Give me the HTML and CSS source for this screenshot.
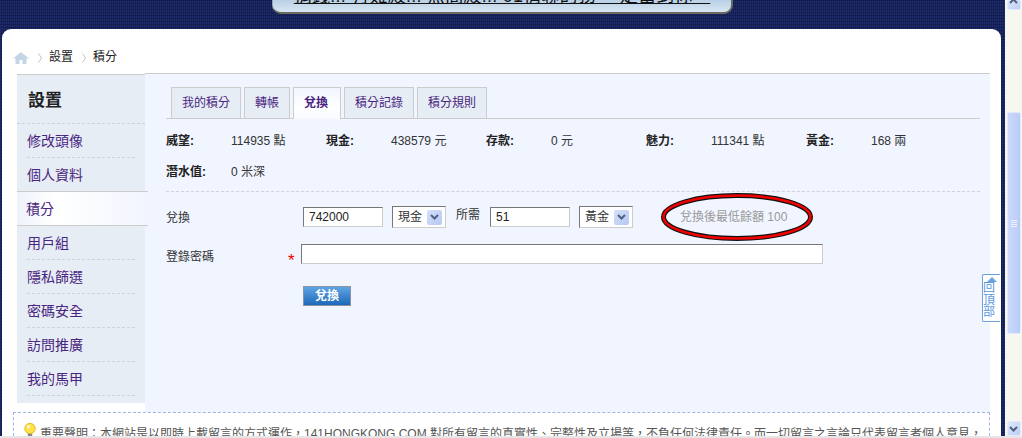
FILE: index.html
```html
<!DOCTYPE html>
<html lang="zh-Hant">
<head>
<meta charset="utf-8">
<title>積分</title>
<link rel="stylesheet" href="styles.css">
</head>
<body>
<div class="viewport">
  <div class="page">
    <div class="banner-wrap"><div class="banner"><span class="banner-text">捐錢!!! 有難殿!!! 無間殿!!! 01情聯的務 一定當到你^^</span></div></div>
    <div class="card">
      <nav class="crumbs">
        <svg class="home" width="16" height="12" viewBox="0 0 16 12"><path d="M8 0 L16 6.5 H13.5 V12 H9.5 V8 H6.5 V12 H2.5 V6.5 H0 Z" fill="#c4d6e6"/></svg>
        <svg class="chev" width="4" height="10" viewBox="0 0 4 10"><path d="M0.5 0.5 L3.5 5 L0.5 9.5" fill="none" stroke="#c4c4c4"/></svg>
        <span>設置</span>
        <svg class="chev" width="4" height="10" viewBox="0 0 4 10"><path d="M0.5 0.5 L3.5 5 L0.5 9.5" fill="none" stroke="#c4c4c4"/></svg>
        <span>積分</span>
      </nav>
      <div class="content">
        <aside class="side">
          <h2 class="side-title">設置</h2>
          <ul class="side-list">
            <li class="side-item"><a class="side-link">修改頭像</a></li>
            <li class="side-item side-plain"><a class="side-link">個人資料</a></li>
            <li class="side-item side-active"><a class="side-link">積分</a></li>
            <li class="side-item"><a class="side-link">用戶組</a></li>
            <li class="side-item"><a class="side-link">隱私篩選</a></li>
            <li class="side-item"><a class="side-link">密碼安全</a></li>
            <li class="side-item"><a class="side-link">訪問推廣</a></li>
            <li class="side-item"><a class="side-link">我的馬甲</a></li>
          </ul>
        </aside>
        <main class="main">
          <ul class="tabs">
            <li class="tab">我的積分</li>
            <li class="tab">轉帳</li>
            <li class="tab tab-active">兌換</li>
            <li class="tab">積分記錄</li>
            <li class="tab">積分規則</li>
          </ul>
          <div class="stats">
            <div class="stat"><b class="stat-k">威望:</b><span>114935 點</span></div>
            <div class="stat"><b class="stat-k">現金:</b><span>438579 元</span></div>
            <div class="stat"><b class="stat-k">存款:</b><span>0 元</span></div>
            <div class="stat"><b class="stat-k">魅力:</b><span>111341 點</span></div>
            <div class="stat"><b class="stat-k">黃金:</b><span>168 兩</span></div>
            <div class="stat"><b class="stat-k">潛水值:</b><span>0 米深</span></div>
          </div>
          <form class="form">
            <div class="row row-ex">
              <label class="lab lab-wide">兌換</label>
              <input class="field field-s" type="text" value="742000">
              <div class="sel"><span>現金</span><span class="sel-btn"><svg width="9" height="6" viewBox="0 0 9 6"><path d="M1 1 L4.5 4.5 L8 1" fill="none" stroke="#4d6185" stroke-width="2"/></svg></span></div>
              <span class="need">所需</span>
              <input class="field field-s" type="text" value="51">
              <div class="sel"><span>黃金</span><span class="sel-btn"><svg width="9" height="6" viewBox="0 0 9 6"><path d="M1 1 L4.5 4.5 L8 1" fill="none" stroke="#4d6185" stroke-width="2"/></svg></span></div>
              <span class="hint">兌換後最低餘額 100
                <svg class="oval" width="154" height="50" viewBox="0 0 154 50"><ellipse cx="77" cy="25" rx="73.5" ry="21.5" fill="none" stroke="#111" stroke-width="5"/><ellipse cx="77" cy="25" rx="73.5" ry="21.5" fill="none" stroke="#f00000" stroke-width="2.6"/></svg>
              </span>
            </div>
            <div class="row row-pw">
              <label class="lab lab-pw">登錄密碼</label>
              <span class="star">*</span>
              <input class="field field-l" type="text">
            </div>
            <button class="submit" type="button">兌換</button>
          </form>
        </main>
      </div>
      <div class="notice">
        <svg class="bulb" width="12" height="16" viewBox="0 0 12 16"><circle cx="6" cy="5.5" r="5.2" fill="#ffe14a" stroke="#d9b400" stroke-width="0.8"/><circle cx="4.5" cy="3.8" r="1.7" fill="#fff9c8"/><rect x="3.8" y="10.8" width="4.4" height="3.6" fill="#8a8a8a"/></svg>
        <span class="notice-text">重要聲明&#xFF1A;本網站是以即時上載留言的方式運作&#xFF0C;141HONGKONG.COM 對所有留言的真實性、完整性及立場等&#xFF0C;不負任何法律責任。而一切留言之言論只代表留言者個人意見&#xFF0C;</span>
      </div>
      <a class="totop"><svg class="totop-arrow" width="10" height="5" viewBox="0 0 10 5"><path d="M5 0 L10 5 H0 Z" fill="#6aa2e2"/></svg>回頂部</a>
    </div>
  </div>
  <div class="scrollbar">
    <div class="sb-btn sb-up"><svg width="9" height="6" viewBox="0 0 9 6"><path d="M1 1 L4.5 4.5 L8 1" fill="none" stroke="#4d6185" stroke-width="2"/></svg></div>
    <div class="sb-thumb"><span class="grip"></span><span class="grip"></span><span class="grip"></span><span class="grip"></span></div>
    <div class="sb-gap"></div>
    <div class="sb-btn sb-down"><svg width="9" height="6" viewBox="0 0 9 6"><path d="M1 1 L4.5 4.5 L8 1" fill="none" stroke="#4d6185" stroke-width="2"/></svg></div>
  </div>
</div>
<div class="statusline"></div>
</body>
</html>
```
FILE: styles.css
```css
* { box-sizing: border-box; }
html, body { margin: 0; padding: 0; height: 438px; overflow: hidden; }
body {
  font: 12px/1.2 "Liberation Sans", "Noto Sans CJK TC", sans-serif;
  color: #333;
  background: #e8e8e8;
}
ul { list-style: none; margin: 0; padding: 0; }
.viewport { display: flex; height: 436px; overflow: hidden; }
.page {
  flex: 1;
  min-width: 0;
  background-color: #14215f;
  background-image:
    repeating-linear-gradient(0deg, rgba(0,0,0,.22) 0 1px, transparent 1px 3px),
    repeating-linear-gradient(90deg, rgba(255,255,255,.05) 0 1px, transparent 1px 2px);
}
.banner-wrap { display: flex; justify-content: center; height: 29px; }
.banner {
  width: 461px;
  height: 14px;
  overflow: hidden;
  display: flex;
  justify-content: center;
  align-items: flex-end;
  padding-bottom: 5px;
  background: linear-gradient(#b9d0e6, #d8e6f2);
  border-right: 2px solid #6a6a60;
  border-bottom: 2px solid #6a6a60;
  border-left: 1px solid #9aa6b0;
  border-radius: 0 0 9px 9px;
}
.banner-text {
  flex: none;
  font-size: 18px;
  line-height: 22px;
  letter-spacing: .25px;
  color: #111;
  text-decoration: underline;
  white-space: nowrap;
}
.card {
  position: relative;
  margin: 0 4px 0 2px;
  height: 407px;
  padding: 0 11px;
  background: #fff;
  border-radius: 9px 9px 0 0;
}
.crumbs {
  display: flex;
  align-items: center;
  height: 44px;
  padding-top: 13px;
  color: #222;
}
.home { flex: none; margin-right: 9px; }
.chev { flex: none; margin-right: 7px; }
.crumbs span { margin-right: 9px; }
.content { display: flex; height: 339px; margin-left: 4px; }
.side {
  flex: none;
  width: 128px;
  height: 329px;
  margin-top: 1px;
  background: #e6edf5;
  border-top: 1px solid #ccc;
}
.side-title {
  margin: 0;
  height: 49px;
  padding: 16px 11px 0;
  font-size: 17px;
  line-height: 20px;
  font-weight: bold;
  color: #222;
  border-bottom: 1px dashed #cdd3dc;
}
.side-item {
  height: 34px;
  margin: 0 10px;
  font-size: 14px;
  border-bottom: 1px dashed #cdd3dc;
}
.side-link { display: block; line-height: 35px; color: #4a2580; }
.side-plain { height: 33px; border-bottom: 0; }
.side-active {
  position: relative;
  height: 35px;
  margin: 0 -3px 0 0;
  padding-left: 9px;
  background: linear-gradient(to right, #eef3fa, #fff 30%, #f1f5fe);
  border-top: 1px solid #ccc;
  border-bottom: 1px solid #ccc;
}
.main {
  flex: 1;
  min-width: 0;
  padding: 13px 10px 0 21px;
  background: #f1f5ff;
  border-top: 1px solid #ccc;
}
.tabs {
  display: flex;
  gap: 3px;
  height: 32px;
  padding-left: 5px;
  border-bottom: 1px solid #ccc;
}
.tab {
  height: 31px;
  padding: 0 10px;
  line-height: 31px;
  color: #4a2580;
  background: #e6edf5;
  border: 1px solid #ccc;
  border-bottom: 0;
}
.tab-active {
  height: 32px;
  padding: 0 12px 0 10px;
  margin-bottom: -1px;
  font-weight: bold;
  background: linear-gradient(#f1f5ff, #fff 60%, #f8faff);
}
.stats {
  display: flex;
  flex-wrap: wrap;
  padding: 7px 0 3px;
  border-bottom: 1px dashed #cdd3dc;
}
.stat { display: flex; width: 160px; height: 31px; align-items: center; }
.stat-k { width: 65px; color: #222; }
.form { padding-top: 14px; }
.row { display: flex; align-items: center; }
.row-ex { height: 22px; }
.row-pw { height: 20px; margin-top: 16px; }
.lab { width: 122px; flex: none; color: #333; padding-top: 2px; }
.lab-wide { width: 137px; }
.lab-pw { padding-top: 6px; }
.field {
  height: 20px;
  padding: 0 5px;
  font: inherit;
  color: #222;
  background: #fff;
  border: 1px solid #ccc;
  border-top-color: #777;
  border-left-color: #777;
  border-radius: 0;
  outline: 0;
}
.field-s { width: 80px; flex: none; }
.field-l { width: 522px; flex: none; }
.star { width: 13px; flex: none; margin-top: 12px; color: #e00; font-size: 17px; line-height: 17px; }
.sel {
  display: flex;
  align-items: center;
  justify-content: space-between;
  flex: none;
  width: 54px;
  height: 22px;
  margin-left: 9px;
  padding: 0 3px 0 5px;
  background: #fff;
  border: 1px solid #ccc;
  border-top-color: #777;
  border-left-color: #777;
}
.sel-btn {
  display: flex;
  align-items: center;
  justify-content: center;
  width: 15px;
  height: 15px;
  background: linear-gradient(135deg, #d4e0fa, #b6c9f3);
  border-radius: 2px;
}
.need { margin: -4px 10px 0 10px; color: #333; }
.hint { position: relative; margin-left: 47px; color: #999; }
.oval { position: absolute; left: -20px; top: -18px; }
.submit {
  display: block;
  width: 48px;
  height: 20px;
  margin: 22px 0 0 137px;
  padding: 0;
  font: bold 12px/18px "Liberation Sans", "Noto Sans CJK TC", sans-serif;
  color: #fff;
  background: linear-gradient(#5ea5e4, #1d68b8);
  border: 1px solid #8a93a0;
}
.notice {
  display: flex;
  align-items: flex-start;
  height: 40px;
  padding: 10px 0 0 10px;
  font-size: 12px;
  line-height: 20px;
  color: #555;
  white-space: nowrap;
  overflow: hidden;
  border: 1px dashed #a3b2e2;
  border-bottom: 0;
}
.bulb { flex: none; margin-right: 4px; }
.notice-text { padding-top: 1px; }
.totop {
  position: absolute;
  right: 1px;
  top: 245px;
  display: flex;
  flex-direction: column;
  align-items: center;
  width: 18px;
  height: 48px;
  padding-top: 2px;
  font-size: 12px;
  line-height: 12px;
  color: #5c97dc;
  background: #fff;
  border: 1px solid #6aa2e2;
  border-right: 0;
  border-radius: 2px 0 0 2px;
}
.totop-arrow { flex: none; }
.scrollbar {
  flex: none;
  display: flex;
  flex-direction: column;
  align-items: center;
  width: 17px;
  background: #f7f7f2;
}
.sb-btn {
  flex: none;
  display: flex;
  align-items: center;
  justify-content: center;
  width: 14px;
  background: linear-gradient(135deg, #dfe8fb, #bccdf5);
  border: 1px solid #e3eafb;
  border-radius: 2px;
}
.sb-up { height: 10px; border-top: 0; align-items: flex-start; overflow: hidden; }
.sb-up svg { transform: rotate(180deg); margin-top: -2px; }
.sb-down { height: 15px; }
.sb-thumb {
  flex: none;
  display: flex;
  flex-direction: column;
  align-items: center;
  justify-content: center;
  gap: 1px;
  width: 14px;
  height: 222px;
  margin-top: 102px;
  background: linear-gradient(to right, #cbd9fa, #b9cbf6);
  border: 1px solid #e3eafb;
  border-radius: 2px;
}
.grip { display: block; width: 6px; height: 1px; background: #eef3ff; }
.sb-gap { flex: 1; }
.statusline { height: 2px; background: #e6e6e6; }
```
